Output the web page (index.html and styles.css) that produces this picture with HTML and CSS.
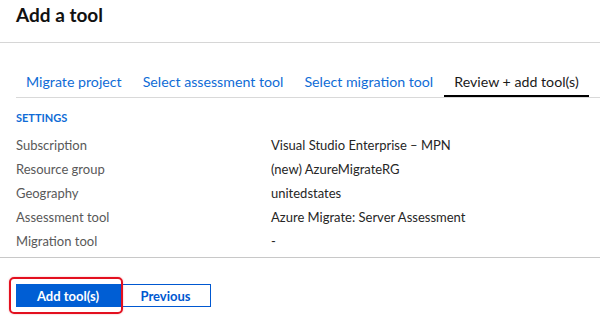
FILE: index.html
```html
<!DOCTYPE html>
<html lang="en">
<head>
  <meta charset="UTF-8">
  <title>Add a tool</title>
  <link rel="stylesheet" href="styles.css">
</head>
<body>
  <header class="blade-header">
    <h1>Add a tool</h1>
  </header>

  <nav class="tabs">
    <a class="tab">Migrate project</a>
    <a class="tab">Select assessment tool</a>
    <a class="tab">Select migration tool</a>
    <a class="tab active">Review + add tool(s)</a>
  </nav>

  <section class="settings">
    <h2>SETTINGS</h2>
    <div class="row"><span class="label">Subscription</span><span class="value">Visual Studio Enterprise – MPN</span></div>
    <div class="row"><span class="label">Resource group</span><span class="value">(new) AzureMigrateRG</span></div>
    <div class="row"><span class="label">Geography</span><span class="value">unitedstates</span></div>
    <div class="row"><span class="label">Assessment tool</span><span class="value">Azure Migrate: Server Assessment</span></div>
    <div class="row"><span class="label">Migration tool</span><span class="value">-</span></div>
  </section>

  <footer class="actions">
    <span class="callout"><button class="btn primary">Add tool(s)</button></span>
    <button class="btn secondary">Previous</button>
  </footer>
</body>
</html>
```

FILE: styles.css
```css
body {
  margin: 0;
  background: #fff;
  font-family: Lato, "Open Sans", sans-serif;
  color: #262626;
  height: 322px;
}

.blade-header {
  height: 42px;
  border-bottom: 1px solid #d6d6d6;
  padding: 0 16px;
}

.blade-header h1 {
  margin: 0;
  padding-top: 3px;
  font-size: 19px;
  line-height: 24px;
  font-weight: 700;
  color: #111;
}

.tabs {
  display: flex;
  margin: 24px 0 0 16px;
  border-bottom: 1px solid #d9d9d9;
}

.tab {
  flex-shrink: 0;
  white-space: nowrap;
  padding: 5px 10px 3px;
  font-size: 14.2px;
  line-height: 20px;
  color: #0f6cd6;
  border-bottom: 2px solid transparent;
  margin-right: 1px;
}

.tab.active {
  color: #1a1a1a;
  border-bottom-color: #000;
}

.settings {
  padding: 0 16px 4px;
  border-bottom: 1px solid #c8c8c8;
}

.settings h2 {
  margin: 12px 0 7px;
  font-size: 11px;
  line-height: 16px;
  font-weight: 700;
  color: #0f6cd6;
}

.row {
  display: flex;
  font-size: 13px;
  line-height: 24px;
  white-space: nowrap;
}

.label {
  width: 255px;
  color: #595959;
}

.value {
  color: #262626;
}

.actions {
  display: flex;
  padding: 26px 16px 0;
}

.btn {
  display: block;
  height: 23px;
  padding: 0;
  font-family: inherit;
  font-size: 13px;
  font-weight: 700;
  border-radius: 0;
  cursor: pointer;
}

/* red callout drawn round the main action */
.callout {
  position: relative;
}

.callout::after {
  content: "";
  position: absolute;
  top: -7px;
  left: -7px;
  right: -3px;
  bottom: -7px;
  border: 2px solid #e3101f;
  border-radius: 5px;
  box-shadow: 0 0 2px rgba(227, 16, 31, 0.35);
  pointer-events: none;
}

.primary {
  width: 104px;
  background: #005ed4;
  color: #fff;
  border: none;
}

.secondary {
  width: 91px;
  background: #fff;
  color: #0058d1;
  border: 1px solid #0058d1;
}
```
